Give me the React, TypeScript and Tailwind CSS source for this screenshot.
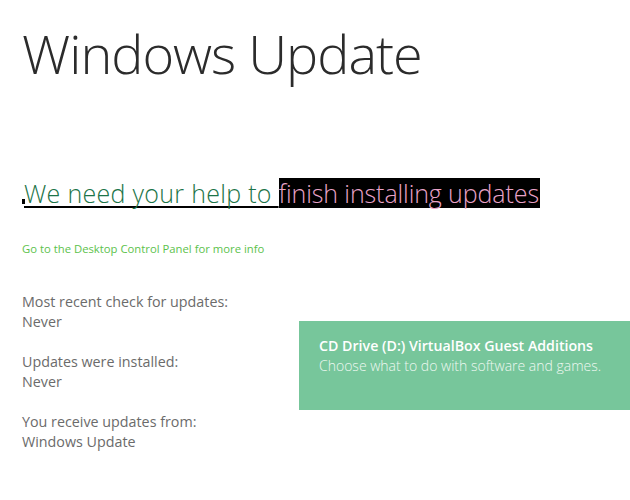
const info = [
    {label: 'Most recent check for updates:', value: 'Never'},
    {label: 'Updates were installed:', value: 'Never'},
    {label: 'You receive updates from:', value: 'Windows Update'},
]

export default function App() {
    return (
        <div className="relative w-[630px] h-[500px] bg-white overflow-hidden" style={{fontFamily: '"Open Sans", "Noto Sans", sans-serif'}}>
            <div className="pl-[22px] pt-[23px]">
                <h1 className="text-[54px] leading-[60px] font-light text-[#2b2b2b] tracking-[-1px]">Windows Update</h1>

                <div className="mt-[95px] flex items-end h-[30px]">
                    <span className="inline-block w-[3px] h-[5px] bg-black mb-[4px] -mr-[1px]"/>
                    <span className="text-[25px] leading-[30px] font-light text-[#1c7448] tracking-[0.3px] underline decoration-black decoration-[1.5px] underline-offset-[3px] [text-decoration-skip-ink:none] whitespace-pre">We need your help to </span>
                    <span className="text-[25px] leading-[30px] font-light text-[#e9a3c8] bg-black pr-[1px] tracking-[-0.1px] whitespace-pre">finish installing updates</span>
                </div>

                <p className="mt-[33px] text-[11.3px] leading-[16px] text-[#5cc24c]">Go to the Desktop Control Panel for more info</p>

                <div className="mt-[35px] flex flex-col gap-[20px] text-[14.3px] leading-[20px] text-[#6b6b6b]">
                    {info.map((item) => (
                        <div key={item.label}>
                            <p>{item.label}</p>
                            <p>{item.value}</p>
                        </div>
                    ))}
                </div>
            </div>

            {/* toast */}
            <div className="absolute left-[299px] top-[321px] w-[331px] h-[89px] bg-[#77c69b] pl-[20px] pt-[15px] text-white">
                <p className="text-[14.2px] leading-[20px] font-semibold">CD Drive (D:) VirtualBox Guest Additions</p>
                <p className="text-[14px] leading-[20px] font-light text-[#eef8f1]">Choose what to do with software and games.</p>
            </div>
        </div>
    )
}
